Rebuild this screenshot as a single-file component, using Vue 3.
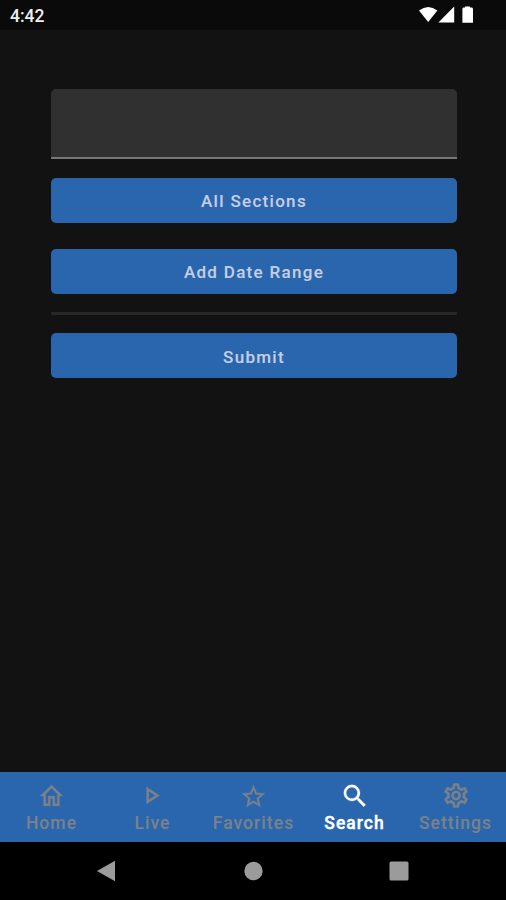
<script setup>
const tabs = [
  {
    label: 'Home',
    box: '2 3 20 17',
    w: 23,
    h: 21,
    path: 'M12 5.69L17 10.19V18H15V12H9V18H7V10.19L12 5.69M12 3L2 12H5V20H11V14H13V20H19V12H22L12 3Z'
  },
  {
    label: 'Live',
    box: '-0.5 0 24 24',
    w: 29,
    h: 29,
    path: 'M8.5 8.64L13.77 12L8.5 15.36V8.64M6.5 5V19L17.5 12L6.5 5Z'
  },
  {
    label: 'Favorites',
    box: '2 2 20 19',
    w: 23,
    h: 22,
    path: 'M12 15.39L8.24 17.66L9.23 13.38L5.91 10.5L10.29 10.13L12 6.09L13.71 10.13L18.09 10.5L14.77 13.38L15.76 17.66M22 9.24L14.81 8.63L12 2L9.19 8.63L2 9.24L7.45 13.97L5.82 21L12 17.27L18.18 21L16.54 13.97L22 9.24Z'
  },
  {
    label: 'Search',
    active: true,
    box: '0 0 24 24',
    w: 30,
    h: 30,
    path: 'M9.5 3A6.5 6.5 0 0 1 16 9.5C16 11.11 15.41 12.59 14.44 13.73L14.71 14H15.5L20.5 19L19 20.5L14 15.5V14.71L13.73 14.44C12.59 15.41 11.11 16 9.5 16A6.5 6.5 0 0 1 3 9.5A6.5 6.5 0 0 1 9.5 3M9.5 5C7 5 5 7 5 9.5C5 12 7 14 9.5 14C12 14 14 12 14 9.5C14 7 12 5 9.5 5Z'
  },
  {
    label: 'Settings',
    box: '-0.5 0 24 24',
    w: 29,
    h: 29,
    path: 'M12 8A4 4 0 0 1 16 12A4 4 0 0 1 12 16A4 4 0 0 1 8 12A4 4 0 0 1 12 8M12 10A2 2 0 0 0 10 12A2 2 0 0 0 12 14A2 2 0 0 0 14 12A2 2 0 0 0 12 10M10 22C9.75 22 9.54 21.82 9.5 21.58L9.13 18.93C8.5 18.68 7.96 18.34 7.44 17.94L4.95 18.95C4.73 19.03 4.46 18.95 4.34 18.73L2.34 15.27C2.21 15.05 2.27 14.78 2.46 14.63L4.57 12.97L4.5 12L4.57 11L2.46 9.37C2.27 9.22 2.21 8.95 2.34 8.73L4.34 5.27C4.46 5.05 4.73 4.96 4.95 5.05L7.44 6.05C7.96 5.66 8.5 5.32 9.13 5.07L9.5 2.42C9.54 2.18 9.75 2 10 2H14C14.25 2 14.46 2.18 14.5 2.42L14.87 5.07C15.5 5.32 16.04 5.66 16.56 6.05L19.05 5.05C19.27 4.96 19.54 5.05 19.66 5.27L21.66 8.73C21.79 8.95 21.73 9.22 21.54 9.37L19.43 11L19.5 12L19.43 13L21.54 14.63C21.73 14.78 21.79 15.05 21.66 15.27L19.66 18.73C19.54 18.95 19.27 19.04 19.05 18.95L16.56 17.95C16.04 18.34 15.5 18.68 14.87 18.93L14.5 21.58C14.46 21.82 14.25 22 14 22H10M11.25 4L10.88 6.61C9.68 6.86 8.62 7.5 7.85 8.39L5.44 7.35L4.69 8.65L6.8 10.2C6.4 11.37 6.4 12.64 6.8 13.8L4.68 15.36L5.43 16.66L7.86 15.62C8.63 16.5 9.68 17.14 10.87 17.38L11.24 20H12.76L13.13 17.39C14.32 17.14 15.37 16.5 16.14 15.62L18.57 16.66L19.32 15.36L17.2 13.81C17.6 12.64 17.6 11.37 17.2 10.2L19.31 8.65L18.56 7.35L16.15 8.39C15.38 7.5 14.32 6.86 13.12 6.62L12.75 4H11.25Z'
  }
]
</script>

<template>
  <div class="screen">
    <header class="status">
      <span class="clock">4:42</span>
      <svg class="indicators" width="56" height="18" viewBox="0 0 56 18" fill="currentColor">
        <path d="M0 4.5Q9.2-2.6 18.4 4.5L9.2 16Z" />
        <path d="M19.4 16.5L35.2 0.5V16.5Z" />
        <path d="M46 0.4H51V1.6H52.4C53.4 1.6 54 2.2 54 3.2V16.8H43.4V3.2C43.4 2.2 44 1.6 45 1.6H46Z" />
      </svg>
    </header>

    <main class="form">
      <input class="query" type="text" aria-label="Search text" />
      <button class="btn sections">All Sections</button>
      <button class="btn dates">Add Date Range</button>
      <div class="divider"></div>
      <button class="btn submit">Submit</button>
    </main>

    <nav class="tabs">
      <div v-for="tab in tabs" :key="tab.label" class="tab" :class="{ active: tab.active }">
        <div class="icon">
          <svg :width="tab.w" :height="tab.h" :viewBox="tab.box" preserveAspectRatio="none" fill="currentColor">
            <path :d="tab.path" />
          </svg>
        </div>
        <span class="label">{{ tab.label }}</span>
      </div>
    </nav>

    <footer class="system">
      <svg width="20" height="22" viewBox="0 0 20 22" fill="currentColor"><path d="M0 11L18 0.7V21.3Z" /></svg>
      <svg width="20" height="20" viewBox="0 0 20 20" fill="currentColor"><circle cx="10.5" cy="10" r="9.2" /></svg>
      <svg width="20" height="20" viewBox="0 0 20 20" fill="currentColor"><rect x="0.5" y="0.5" width="19" height="19" rx="1.5" /></svg>
    </footer>
  </div>
</template>

<style>
body {
  background: #121212;
}
</style>

<style scoped>
.screen {
  display: flex;
  flex-direction: column;
  height: 900px;
  background: #121212;
  font-family: Roboto, sans-serif;
  overflow: hidden;
}
.status {
  box-sizing: border-box;
  height: 30px;
  padding: 1px 31px 0 10px;
  display: flex;
  align-items: center;
  justify-content: space-between;
  flex: none;
  background: #0a0a0a;
  color: #fff;
}
.clock {
  font-size: 17.5px;
  font-weight: 500;
  color: #eee;
}
.indicators {
  margin-bottom: 1px;
}
.form {
  flex: 1;
  display: flex;
  flex-direction: column;
  padding: 59px 49px 0 51px;
}
.query {
  box-sizing: border-box;
  width: 100%;
  height: 70px;
  padding: 0 16px;
  border: 0;
  border-bottom: 2px solid #777;
  border-radius: 5px 5px 0 0;
  background: #303030;
  color: #fff;
  font: 18px Roboto, sans-serif;
  outline: none;
  margin-bottom: 19px;
  flex: none;
}
.btn {
  height: 45px;
  flex: none;
  padding: 0;
  border: 0;
  border-radius: 5px;
  background: #2a66ae;
  color: #c5cee2;
  font: 500 17px Roboto, sans-serif;
  letter-spacing: 1.3px;
  -webkit-text-stroke: 0.1px currentColor;
}
.sections {
  margin-bottom: 26px;
}
.dates {
  margin-bottom: 18px;
}
.submit {
  padding-top: 2px;
}
.divider {
  height: 3px;
  flex: none;
  background: #272727;
  margin-bottom: 18px;
}
.tabs {
  box-sizing: border-box;
  height: 70px;
  flex: none;
  display: grid;
  grid-template-columns: repeat(5, 1fr);
  padding: 8.5px 0 0 1px;
  background: #2a66ae;
}
.tab {
  display: flex;
  flex-direction: column;
  align-items: center;
  color: #7b818a;
}
.tab.active {
  color: #fff;
}
.icon {
  height: 30px;
  display: flex;
  align-items: center;
  stroke: currentColor;
  stroke-width: 0.2px;
}
.icon svg {
  overflow: visible;
}
.label {
  font-size: 17.5px;
  line-height: 24px;
  font-weight: 500;
  letter-spacing: 1.05px;
  white-space: nowrap;
  -webkit-text-stroke: 0.1px currentColor;
}
.active .label {
  letter-spacing: 1px;
  -webkit-text-stroke-width: 0.4px;
}
.system {
  box-sizing: border-box;
  height: 58px;
  flex: none;
  display: flex;
  align-items: center;
  justify-content: space-between;
  padding: 0 97px;
  background: #000;
  color: #9b9b9b;
}
</style>
